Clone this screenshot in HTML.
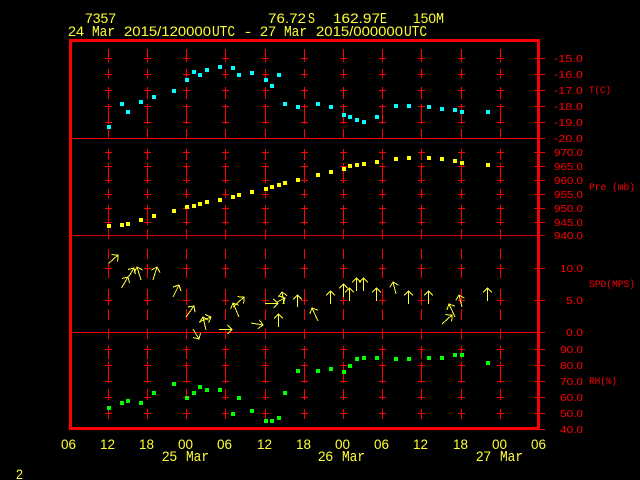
<!DOCTYPE html>
<html><head><meta charset="utf-8"><title>7357</title>
<style>
html,body{margin:0;padding:0;background:#000;width:640px;height:480px;overflow:hidden}
svg{display:block}
.y{fill:#ffff33;font:13.5px "Liberation Sans",sans-serif}
.r{fill:#f00;font:10px "Liberation Sans",sans-serif}
.ym{fill:#ffff33;font:14.5px "Liberation Mono",monospace}
.rm{fill:#f00;font:10.5px "Liberation Mono",monospace}
</style></head><body>
<svg width="640" height="480" viewBox="0 0 640 480" xmlns="http://www.w3.org/2000/svg">
<defs>
<path id="c" fill="none" stroke="#f00" stroke-width="1" shape-rendering="crispEdges" d="M.5 49V62M.5 69V78M.5 87V99M.5 104V124M.5 129V138
M.5 149V160M.5 163V183M.5 189V198M.5 205V225M.5 229V239
M.5 249V259M.5 264V278M.5 289V305M.5 309V320M.5 329V339
M.5 346V359M.5 362V383M.5 389V400M.5 409V419
M-3 58.5H4M-3 74.5H4M-3 90.5H4M-3 106.5H4M-3 122.5H4
M-3 152.5H4M-3 166.5H4M-3 180.5H4M-3 194.5H4M-3 208.5H4M-3 222.5H4
M-3 268.5H4M-3 300.5H4
M-3 349.5H4M-3 365.5H4M-3 381.5H4M-3 397.5H4M-3 413.5H4"/>
<marker id="h" markerUnits="userSpaceOnUse" markerWidth="14" markerHeight="14" refX="7" refY="7" orient="auto">
<path d="M2.5 2.5L7 7L2.5 11.5" fill="none" stroke="#ff3" stroke-width="1" shape-rendering="crispEdges"/>
</marker>
</defs>
<rect width="640" height="480" fill="#000"/>

<!-- grid columns -->
<use href="#c" x="108"/><use href="#c" x="147"/><use href="#c" x="186"/><use href="#c" x="225"/>
<use href="#c" x="265"/><use href="#c" x="304"/><use href="#c" x="343"/><use href="#c" x="382"/>
<use href="#c" x="421"/><use href="#c" x="461"/><use href="#c" x="500"/>

<!-- panel lines and right axis ticks -->
<g fill="none" stroke="#f00" stroke-width="1" shape-rendering="crispEdges">
<path d="M72 138.5H545M72 332.5H545"/>
<path d="M72 235.5H545" stroke="#d00000"/>
<path d="M534 58.5H545M534 74.5H545M534 90.5H545M534 106.5H545M534 122.5H545M534 152.5H545M534 166.5H545M534 180.5H545M534 194.5H545M534 208.5H545M534 222.5H545M534 268.5H545M534 300.5H545M534 349.5H545M534 365.5H545M534 381.5H545M534 397.5H545M534 413.5H545M534 429.5H545"/>
<rect x="70.5" y="40.5" width="468" height="388" stroke-width="3"/>
</g>

<!-- cyan temperature -->
<g fill="#00ffff" shape-rendering="crispEdges">
<rect x="107" y="125" width="4" height="4"/><rect x="120" y="102" width="4" height="4"/><rect x="126" y="110" width="4" height="4"/><rect x="139" y="100" width="4" height="4"/><rect x="152" y="95" width="4" height="4"/><rect x="172" y="89" width="4" height="4"/><rect x="185" y="78" width="4" height="4"/><rect x="192" y="70" width="4" height="4"/><rect x="198" y="73" width="4" height="4"/><rect x="205" y="68" width="4" height="4"/><rect x="218" y="65" width="4" height="4"/><rect x="231" y="66" width="4" height="4"/><rect x="237" y="73" width="4" height="4"/><rect x="250" y="71" width="4" height="4"/><rect x="264" y="78" width="4" height="4"/><rect x="270" y="84" width="4" height="4"/><rect x="277" y="73" width="4" height="4"/><rect x="283" y="102" width="4" height="4"/><rect x="296" y="105" width="4" height="4"/><rect x="316" y="102" width="4" height="4"/><rect x="329" y="105" width="4" height="4"/><rect x="342" y="113" width="4" height="4"/><rect x="348" y="115" width="4" height="4"/><rect x="355" y="118" width="4" height="4"/><rect x="362" y="120" width="4" height="4"/><rect x="375" y="115" width="4" height="4"/><rect x="394" y="104" width="4" height="4"/><rect x="407" y="104" width="4" height="4"/><rect x="427" y="105" width="4" height="4"/><rect x="440" y="107" width="4" height="4"/><rect x="453" y="108" width="4" height="4"/><rect x="460" y="110" width="4" height="4"/><rect x="486" y="110" width="4" height="4"/>
</g>

<!-- yellow pressure -->
<g fill="#ffff00" shape-rendering="crispEdges">
<rect x="107" y="224" width="4" height="4"/><rect x="120" y="223" width="4" height="4"/><rect x="126" y="222" width="4" height="4"/><rect x="139" y="218" width="4" height="4"/><rect x="152" y="214" width="4" height="4"/><rect x="172" y="209" width="4" height="4"/><rect x="185" y="205" width="4" height="4"/><rect x="192" y="204" width="4" height="4"/><rect x="198" y="202" width="4" height="4"/><rect x="205" y="200" width="4" height="4"/><rect x="218" y="198" width="4" height="4"/><rect x="231" y="195" width="4" height="4"/><rect x="237" y="193" width="4" height="4"/><rect x="250" y="190" width="4" height="4"/><rect x="264" y="187" width="4" height="4"/><rect x="270" y="185" width="4" height="4"/><rect x="277" y="183" width="4" height="4"/><rect x="283" y="181" width="4" height="4"/><rect x="296" y="178" width="4" height="4"/><rect x="316" y="173" width="4" height="4"/><rect x="329" y="170" width="4" height="4"/><rect x="342" y="167" width="4" height="4"/><rect x="348" y="164" width="4" height="4"/><rect x="355" y="163" width="4" height="4"/><rect x="362" y="162" width="4" height="4"/><rect x="375" y="160" width="4" height="4"/><rect x="394" y="157" width="4" height="4"/><rect x="407" y="156" width="4" height="4"/><rect x="427" y="156" width="4" height="4"/><rect x="440" y="157" width="4" height="4"/><rect x="453" y="159" width="4" height="4"/><rect x="460" y="161" width="4" height="4"/><rect x="486" y="163" width="4" height="4"/>
</g>

<!-- green RH -->
<g fill="#00ff00" shape-rendering="crispEdges">
<rect x="107" y="406" width="4" height="4"/><rect x="120" y="401" width="4" height="4"/><rect x="126" y="399" width="4" height="4"/><rect x="139" y="401" width="4" height="4"/><rect x="152" y="391" width="4" height="4"/><rect x="172" y="382" width="4" height="4"/><rect x="185" y="396" width="4" height="4"/><rect x="192" y="391" width="4" height="4"/><rect x="198" y="385" width="4" height="4"/><rect x="205" y="388" width="4" height="4"/><rect x="218" y="388" width="4" height="4"/><rect x="231" y="412" width="4" height="4"/><rect x="237" y="396" width="4" height="4"/><rect x="250" y="409" width="4" height="4"/><rect x="264" y="419" width="4" height="4"/><rect x="270" y="419" width="4" height="4"/><rect x="277" y="416" width="4" height="4"/><rect x="283" y="391" width="4" height="4"/><rect x="296" y="369" width="4" height="4"/><rect x="316" y="369" width="4" height="4"/><rect x="329" y="367" width="4" height="4"/><rect x="342" y="370" width="4" height="4"/><rect x="348" y="364" width="4" height="4"/><rect x="355" y="357" width="4" height="4"/><rect x="362" y="356" width="4" height="4"/><rect x="375" y="356" width="4" height="4"/><rect x="394" y="357" width="4" height="4"/><rect x="407" y="357" width="4" height="4"/><rect x="427" y="356" width="4" height="4"/><rect x="440" y="356" width="4" height="4"/><rect x="453" y="353" width="4" height="4"/><rect x="460" y="353" width="4" height="4"/><rect x="486" y="361" width="4" height="4"/>
</g>

<!-- wind arrows -->
<g fill="none" stroke="#ffff33" stroke-width="1" shape-rendering="crispEdges">
<path marker-end="url(#h)" d="M108.5 263.5L118 255"/>
<path marker-end="url(#h)" d="M121.5 288L128 277"/>
<path marker-end="url(#h)" d="M128.5 277L134 268"/>
<path marker-end="url(#h)" d="M141 280L137 267"/>
<path marker-end="url(#h)" d="M153 280L157 267"/>
<path marker-end="url(#h)" d="M173 297L179 285"/>
<path marker-end="url(#h)" d="M186 317L194 306"/>
<path marker-end="url(#h)" d="M239 317L233 303"/>
<path marker-end="url(#h)" d="M233 307L244 297"/>
<path marker-end="url(#h)" d="M265 303.5H278"/>
<path marker-end="url(#h)" d="M284 304L282 292"/>
<path marker-end="url(#h)" d="M277 302L285 298"/>
<path marker-end="url(#h)" d="M297.5 307V295"/>
<path marker-end="url(#h)" d="M318 321L312 308"/>
<path marker-end="url(#h)" d="M278.5 327V314"/>
<path marker-end="url(#h)" d="M330.5 304V291"/>
<path marker-end="url(#h)" d="M343.5 297V284"/>
<path marker-end="url(#h)" d="M349.5 301V288"/>
<path marker-end="url(#h)" d="M356.5 291V278"/>
<path marker-end="url(#h)" d="M363.5 291V278"/>
<path marker-end="url(#h)" d="M376.5 301V288"/>
<path marker-end="url(#h)" d="M396 294L393 282"/>
<path marker-end="url(#h)" d="M408.5 304V291"/>
<path marker-end="url(#h)" d="M428.5 304V291"/>
<path marker-end="url(#h)" d="M455 317L449 304"/>
<path marker-end="url(#h)" d="M462 307L459 295"/>
<path marker-end="url(#h)" d="M487.5 301V288"/>
<path marker-end="url(#h)" d="M442 324L452 315"/>
<path marker-end="url(#h)" d="M206 330L203 317"/>
<path marker-end="url(#h)" d="M199 322L211 317"/>
<path marker-end="url(#h)" d="M193 329L199 339"/>
<path marker-end="url(#h)" d="M219 329.5H232"/>
<path marker-end="url(#h)" d="M251 323L263 325"/>
</g>

<!-- header -->
<g class="y">
<text x="85" y="23" textLength="31" lengthAdjust="spacingAndGlyphs">7357</text>
<text x="268" y="23" textLength="38" lengthAdjust="spacingAndGlyphs">76.72</text>
<text x="333" y="23" textLength="47" lengthAdjust="spacingAndGlyphs">162.97</text>
<text x="413" y="23" textLength="23" lengthAdjust="spacingAndGlyphs">150</text>
<text x="68" y="36" textLength="16" lengthAdjust="spacingAndGlyphs">24</text>
<text x="124" y="36" textLength="87" lengthAdjust="spacingAndGlyphs">2015/120000</text>
<text x="245" y="36" textLength="6" lengthAdjust="spacingAndGlyphs">-</text>
<text x="260" y="36" textLength="16" lengthAdjust="spacingAndGlyphs">27</text>
<text x="316" y="36" textLength="87" lengthAdjust="spacingAndGlyphs">2015/000000</text>
</g>
<g class="ym">
<text x="308" y="23" textLength="7" lengthAdjust="spacingAndGlyphs">S</text>
<text x="380" y="23" textLength="7" lengthAdjust="spacingAndGlyphs">E</text>
<text x="436" y="23" textLength="8" lengthAdjust="spacingAndGlyphs">M</text>
<text x="92" y="36" textLength="23" lengthAdjust="spacingAndGlyphs">Mar</text>
<text x="212" y="36" textLength="23" lengthAdjust="spacingAndGlyphs">UTC</text>
<text x="284" y="36" textLength="23" lengthAdjust="spacingAndGlyphs">Mar</text>
<text x="404" y="36" textLength="23" lengthAdjust="spacingAndGlyphs">UTC</text>
</g>

<!-- right axis labels -->
<g class="r">
<text x="554" y="62" textLength="29" lengthAdjust="spacingAndGlyphs">-15.0</text>
<text x="554" y="78" textLength="29" lengthAdjust="spacingAndGlyphs">-16.0</text>
<text x="554" y="94" textLength="29" lengthAdjust="spacingAndGlyphs">-17.0</text>
<text x="554" y="110" textLength="29" lengthAdjust="spacingAndGlyphs">-18.0</text>
<text x="554" y="126" textLength="29" lengthAdjust="spacingAndGlyphs">-19.0</text>
<text x="554" y="142" textLength="29" lengthAdjust="spacingAndGlyphs">-20.0</text>
<text x="554" y="156" textLength="29" lengthAdjust="spacingAndGlyphs">970.0</text>
<text x="554" y="170" textLength="29" lengthAdjust="spacingAndGlyphs">965.0</text>
<text x="554" y="184" textLength="29" lengthAdjust="spacingAndGlyphs">960.0</text>
<text x="554" y="198" textLength="29" lengthAdjust="spacingAndGlyphs">955.0</text>
<text x="554" y="212" textLength="29" lengthAdjust="spacingAndGlyphs">950.0</text>
<text x="554" y="226" textLength="29" lengthAdjust="spacingAndGlyphs">945.0</text>
<text x="554" y="239" textLength="29" lengthAdjust="spacingAndGlyphs">940.0</text>
<text x="560" y="272" textLength="23" lengthAdjust="spacingAndGlyphs">10.0</text>
<text x="566" y="304" textLength="17" lengthAdjust="spacingAndGlyphs">5.0</text>
<text x="566" y="336" textLength="17" lengthAdjust="spacingAndGlyphs">0.0</text>
<text x="560" y="353" textLength="23" lengthAdjust="spacingAndGlyphs">90.0</text>
<text x="560" y="369" textLength="23" lengthAdjust="spacingAndGlyphs">80.0</text>
<text x="560" y="385" textLength="23" lengthAdjust="spacingAndGlyphs">70.0</text>
<text x="560" y="401" textLength="23" lengthAdjust="spacingAndGlyphs">60.0</text>
<text x="560" y="417" textLength="23" lengthAdjust="spacingAndGlyphs">50.0</text>
<text x="560" y="433" textLength="23" lengthAdjust="spacingAndGlyphs">40.0</text>
</g>
<g class="rm">
<text x="589" y="93" textLength="22" lengthAdjust="spacingAndGlyphs">T(C)</text>
<text x="589" y="190" textLength="46" lengthAdjust="spacingAndGlyphs">Pre (mb)</text>
<text x="589" y="287" textLength="46" lengthAdjust="spacingAndGlyphs">SPD(MPS)</text>
<text x="589" y="384" textLength="28" lengthAdjust="spacingAndGlyphs">RH(%)</text>
</g>

<!-- x axis -->
<g class="y">
<text x="61" y="449" textLength="15" lengthAdjust="spacingAndGlyphs">06</text>
<text x="100" y="449" textLength="15" lengthAdjust="spacingAndGlyphs">12</text>
<text x="139" y="449" textLength="15" lengthAdjust="spacingAndGlyphs">18</text>
<text x="178" y="449" textLength="15" lengthAdjust="spacingAndGlyphs">00</text>
<text x="217" y="449" textLength="15" lengthAdjust="spacingAndGlyphs">06</text>
<text x="257" y="449" textLength="15" lengthAdjust="spacingAndGlyphs">12</text>
<text x="296" y="449" textLength="15" lengthAdjust="spacingAndGlyphs">18</text>
<text x="335" y="449" textLength="15" lengthAdjust="spacingAndGlyphs">00</text>
<text x="374" y="449" textLength="15" lengthAdjust="spacingAndGlyphs">06</text>
<text x="413" y="449" textLength="15" lengthAdjust="spacingAndGlyphs">12</text>
<text x="453" y="449" textLength="15" lengthAdjust="spacingAndGlyphs">18</text>
<text x="492" y="449" textLength="15" lengthAdjust="spacingAndGlyphs">00</text>
<text x="531" y="449" textLength="15" lengthAdjust="spacingAndGlyphs">06</text>
<text x="162" y="461" textLength="15" lengthAdjust="spacingAndGlyphs">25</text>
<text x="318" y="461" textLength="15" lengthAdjust="spacingAndGlyphs">26</text>
<text x="476" y="461" textLength="15" lengthAdjust="spacingAndGlyphs">27</text>
<text x="16" y="479" textLength="7" lengthAdjust="spacingAndGlyphs">2</text>
</g>
<g class="ym">
<text x="186" y="461" textLength="23" lengthAdjust="spacingAndGlyphs">Mar</text>
<text x="342" y="461" textLength="23" lengthAdjust="spacingAndGlyphs">Mar</text>
<text x="500" y="461" textLength="23" lengthAdjust="spacingAndGlyphs">Mar</text>
</g>
</svg>
</body></html>
